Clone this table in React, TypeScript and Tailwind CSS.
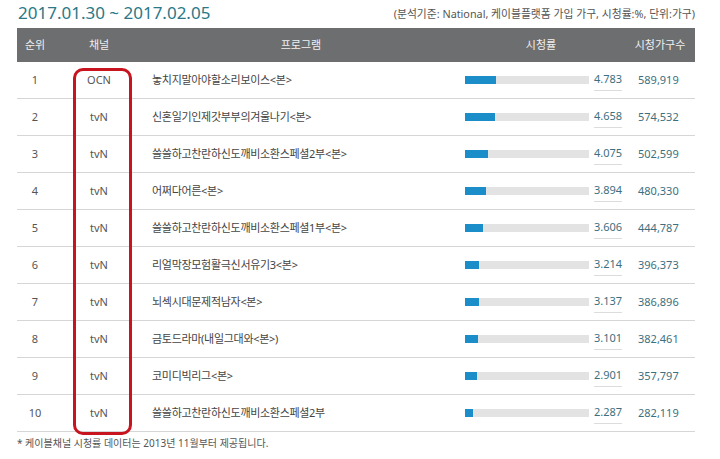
const rows = [
  { rank: 1, ch: "OCN", title: "놓치지말아야할소리보이스<본>", rating: "4.783", fill: 31, hh: "589,919" },
  { rank: 2, ch: "tvN", title: "신혼일기인제갓부부의겨울나기<본>", rating: "4.658", fill: 30, hh: "574,532" },
  { rank: 3, ch: "tvN", title: "쓸쓸하고찬란하신도깨비소환스페셜2부<본>", rating: "4.075", fill: 23, hh: "502,599" },
  { rank: 4, ch: "tvN", title: "어쩌다어른<본>", rating: "3.894", fill: 21, hh: "480,330" },
  { rank: 5, ch: "tvN", title: "쓸쓸하고찬란하신도깨비소환스페셜1부<본>", rating: "3.606", fill: 18, hh: "444,787" },
  { rank: 6, ch: "tvN", title: "리얼막장모험활극신서유기3<본>", rating: "3.214", fill: 14, hh: "396,373" },
  { rank: 7, ch: "tvN", title: "뇌섹시대문제적남자<본>", rating: "3.137", fill: 14, hh: "386,896" },
  { rank: 8, ch: "tvN", title: "금토드라마(내일그대와<본>)", rating: "3.101", fill: 13, hh: "382,461" },
  { rank: 9, ch: "tvN", title: "코미디빅리그<본>", rating: "2.901", fill: 12, hh: "357,797" },
  { rank: 10, ch: "tvN", title: "쓸쓸하고찬란하신도깨비소환스페셜2부", rating: "2.287", fill: 8, hh: "282,119" },
];

export default function App() {
  return (
    <div
      className="w-[720px] h-[459px] bg-white overflow-hidden text-[#555]"
      style={{ fontFamily: '"Noto Sans", "Noto Sans CJK KR", sans-serif' }}
    >
      <div className="flex items-end justify-between pl-[18px] pr-[25px] h-[28px] pb-[5px]">
        <div className="text-[17px] leading-[20px] text-[#2a7888]">2017.01.30 ~ 2017.02.05</div>
        <div className="text-[10.8px] leading-[14px] text-[#555] mb-[2px]">
          (분석기준: National, 케이블플랫폼 가입 가구, 시청률:%, 단위:가구)
        </div>
      </div>

      <div className="relative ml-[17px] w-[678px]">
        {/* header */}
        <div className="flex h-[34px] items-center bg-[#6d6e70] text-[11px] text-[#f0f0f0]">
          <div className="w-[36px] text-center">순위</div>
          <div className="w-[92px] text-center">채널</div>
          <div className="w-[312px] text-center">프로그램</div>
          <div className="w-[168px] text-center">시청률</div>
          <div className="w-[70px] text-center">시청가구수</div>
        </div>

        {rows.map((r) => (
          <div key={r.rank} className="flex h-[37px] items-center border-b border-[#d6d6d6] text-[11px]">
            <div className="w-[36px] text-center text-[#555]">{r.rank}</div>
            <div className="w-[92px] text-center text-[#555]">{r.ch}</div>
            <div className="w-[312px] pl-[7px] text-[#444] tracking-[-0.3px]">{r.title}</div>
            <div className="w-[168px] flex items-center pl-[8px]">
              <div className="w-[124px] h-[8px] bg-[#e3e3e3]">
                <div className="h-full bg-[#1b8ec9]" style={{ width: r.fill }} />
              </div>
              <div className="ml-[5px] w-[28px] pt-[2px] pb-[3px] border-b border-[#dcdcdc] text-[11px] text-[#3d6f80]">
                {r.rating}
              </div>
            </div>
            <div className="w-[70px] pl-[13px] text-[#3d6f80]">{r.hh}</div>
          </div>
        ))}

        {/* highlight box */}
        <div className="absolute left-[56px] top-[40px] w-[59px] h-[367px] border-[3px] border-[#c8141e] rounded-[10px]" />
      </div>

      <div className="pl-[17px] pt-[4px] text-[10px] text-[#555]">
        * 케이블채널 시청률 데이터는 2013년 11월부터 제공됩니다.
      </div>
    </div>
  );
}
